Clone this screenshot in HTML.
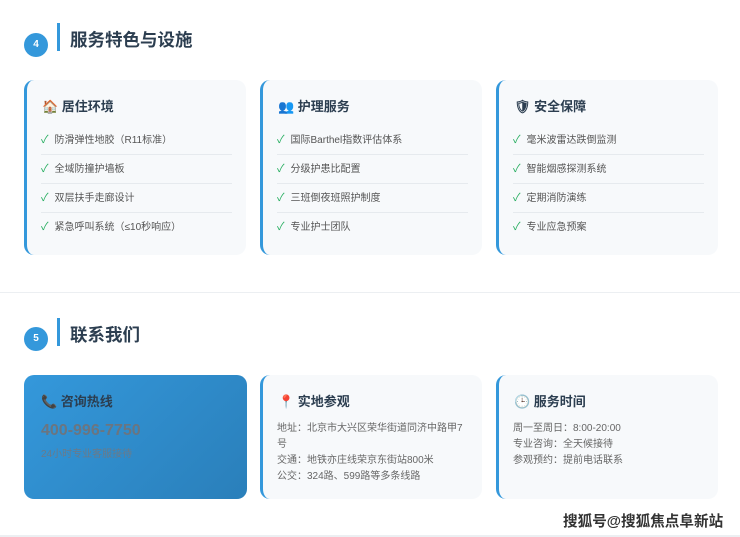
<!DOCTYPE html>
<html><head><meta charset="utf-8"><style>
*{margin:0;padding:0;box-sizing:border-box}
body{width:740px;height:537px;background:#fff;font-family:"Liberation Sans","Noto Sans CJK SC",sans-serif;position:relative;overflow:hidden;color:#2c3e50}
.num{position:absolute;left:24px;width:24px;height:24px;border-radius:50%;background:#3498db;color:#fff;font-size:10px;font-weight:bold;text-align:center;line-height:24px}
.bar{position:absolute;left:57px;width:3px;height:28px;background:#3498db}
.h2{position:absolute;left:70px;font-size:17.5px;font-weight:bold;color:#2c3e50}
.card{position:absolute;width:222px;background:#f7f9fb;border-radius:10px;border-left:3px solid #3498db}
.card h3{position:absolute;left:15px;top:16px;font-size:13px;font-weight:bold;color:#2c3e50}
.card ul{position:absolute;left:14px;right:14px;top:46px;list-style:none}
.card li{height:29px;line-height:28px;font-size:10px;color:#555;border-bottom:1px solid #e6eaee}
.card li:last-child{border-bottom:none}
.card li b{color:#27ae60;font-weight:normal;margin-right:6px;font-size:11px}
.txt{position:absolute;left:14px;top:46px;font-size:10px;line-height:16px;color:#666;right:10px}
</style></head><body>
<div class="num" style="top:33px">4</div>
<div class="bar" style="top:23px"></div>
<div class="h2" style="top:27px">服务特色与设施</div>

<div class="card" style="left:24px;top:80px;height:175px">
<h3>🏠 居住环境</h3>
<ul><li><b>✓</b>防滑弹性地胶（R11标准）</li><li><b>✓</b>全域防撞护墙板</li><li><b>✓</b>双层扶手走廊设计</li><li><b>✓</b>紧急呼叫系统（≤10秒响应）</li></ul></div>
<div class="card" style="left:260px;top:80px;height:175px">
<h3>👥 护理服务</h3>
<ul><li><b>✓</b>国际Barthel指数评估体系</li><li><b>✓</b>分级护患比配置</li><li><b>✓</b>三班倒夜班照护制度</li><li><b>✓</b>专业护士团队</li></ul></div>
<div class="card" style="left:496px;top:80px;height:175px">
<h3>🛡 安全保障</h3>
<ul><li><b>✓</b>毫米波雷达跌倒监测</li><li><b>✓</b>智能烟感探测系统</li><li><b>✓</b>定期消防演练</li><li><b>✓</b>专业应急预案</li></ul></div>

<div style="position:absolute;left:0;right:0;top:292px;height:1px;background:#eceff2"></div>

<div class="num" style="top:327px">5</div>
<div class="bar" style="top:318px"></div>
<div class="h2" style="top:322px">联系我们</div>

<div style="position:absolute;left:24px;top:375px;width:223px;height:124px;border-radius:10px;background:linear-gradient(135deg,#3498db,#2a7fba)">
<div style="position:absolute;left:17px;top:16px;font-size:13px;font-weight:bold;color:#2c3e50">📞 咨询热线</div>
<div style="position:absolute;left:17px;top:47px;font-size:16px;font-weight:bold;color:#6b7580">400-996-7750</div>
<div style="position:absolute;left:17px;top:70px;font-size:10px;color:#6b7a88">24小时专业客服接待</div>
</div>
<div class="card" style="left:260px;top:375px;height:124px">
<h3>📍 实地参观</h3>
<div class="txt">地址：北京市大兴区荣华街道同济中路甲7号<br>交通：地铁亦庄线荣京东街站800米<br>公交：324路、599路等多条线路</div></div>
<div class="card" style="left:496px;top:375px;height:124px">
<h3>🕒 服务时间</h3>
<div class="txt">周一至周日：8:00-20:00<br>专业咨询：全天候接待<br>参观预约：提前电话联系</div></div>

<div style="position:absolute;left:563px;top:510px;font-size:14.6px;font-weight:bold;color:#333;text-shadow:0 0 2px #fff">搜狐号@搜狐焦点阜新站</div>
<div style="position:absolute;left:0;right:0;top:535px;height:2px;background:#eceff2"></div>
</body></html>
